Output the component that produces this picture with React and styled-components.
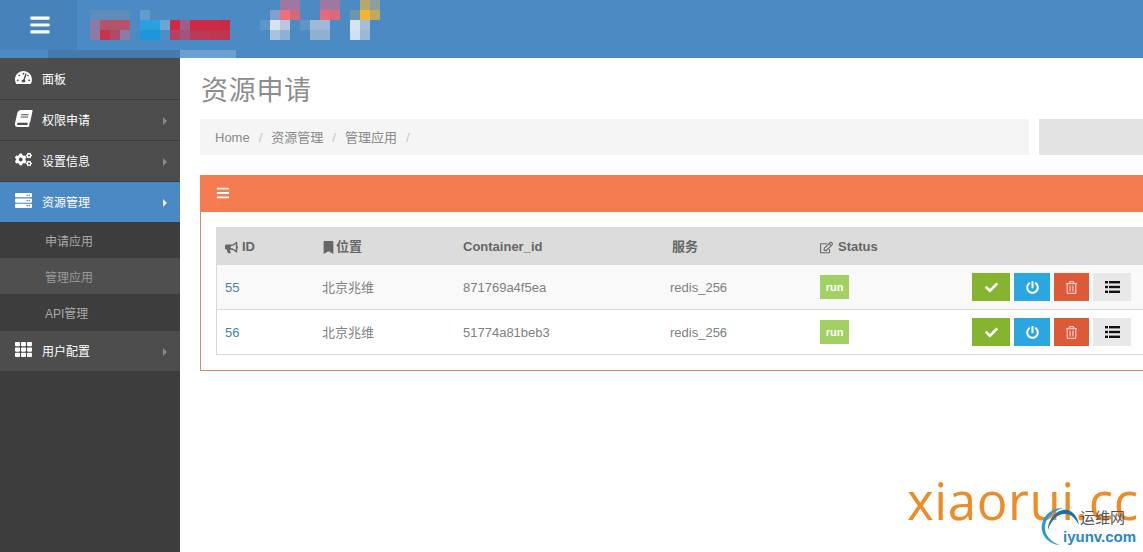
import React from 'react';
import styled, { createGlobalStyle } from 'styled-components';
import {
  FaBars, FaBook, FaBookmark, FaBullhorn, FaCheck, FaCogs, FaPowerOff,
  FaRegEdit, FaRegTrashAlt, FaServer, FaTachometerAlt, FaTh,
} from 'react-icons/fa';

const CJK = `"Liberation Sans", "Noto Sans CJK SC", sans-serif`;

const GlobalStyle = createGlobalStyle`
  html, body {
    margin: 0;
    height: 100%;
    overflow: hidden;
    background: #fff;
    font-family: ${CJK};
  }
  * { box-sizing: border-box; }
`;

const Page = styled.div`
  position: relative;
  width: 1143px;
  height: 552px;
  overflow: hidden;
  display: flex;
  flex-direction: column;
`;

const Header = styled.header`
  position: relative;
  flex: 0 0 58px;
  background: #4c8ac3;
  display: flex;
`;

const MenuCell = styled.div`
  width: 77px;
  height: 50px;
  background: #4882bb;
  color: #fff;
  padding: 14px 0 0 29px;
  font-size: 22px;
  line-height: 22px;
`;

const Mosaic = styled.svg`
  position: absolute;
  left: 0;
  top: 0;
`;

const Body = styled.div`
  flex: 1;
  display: flex;
  min-height: 0;
`;

const Sidebar = styled.nav`
  flex: 0 0 180px;
  background: #3d3d3d;
`;

const NavItem = styled.div`
  height: ${(p) => p.$h || 41}px;
  display: flex;
  align-items: center;
  padding: 2px 14px 0 15px;
  background: ${(p) => (p.$active ? '#4a89c3' : '#4d4d4d')};
  border-bottom: ${(p) => (p.$active ? 'none' : '1px solid #3c3c3c')};
  color: #fff;
  font-size: 12px;
  line-height: 16px;
`;

const NavIcon = styled.span`
  width: 27px;
  display: flex;
  font-size: 17px;
  margin-top: -5px;
  ${(p) => p.$slant && 'svg { transform: skewX(-12deg); }'}
`;

const Caret = styled.span`
  margin-left: auto;
  margin-right: -1px;
  width: 0;
  height: 0;
  border-left: 4px solid ${(p) => (p.$active ? '#e6eef6' : '#8a8a8a')};
  border-top: 4px solid transparent;
  border-bottom: 4px solid transparent;
`;

const SubList = styled.div`
  padding-bottom: 1px;
`;

const SubItem = styled.div`
  height: 36px;
  padding: 4px 0 0 45px;
  display: flex;
  align-items: center;
  font-size: 12px;
  line-height: 16px;
  color: ${(p) => (p.$active ? '#9a9a9a' : '#a8a8a8')};
  background: ${(p) => (p.$active ? '#4f4f4f' : 'transparent')};
`;

const Main = styled.main`
  flex: 1;
  min-width: 0;
  padding: 15px 0 0 20px;
`;

const Title = styled.h1`
  margin: 0 0 9px;
  padding-left: 1px;
  font-size: 27px;
  line-height: 37px;
  font-weight: 400;
  color: #8d8d8d;
  letter-spacing: 0.7px;
`;

const CrumbRow = styled.div`
  display: flex;
  gap: 10px;
  width: 1000px;
  height: 36px;
`;

const Breadcrumb = styled.div`
  flex: 0 0 829px;
  background: #f5f5f5;
  display: flex;
  align-items: center;
  padding: 2px 0 0 15px;
  font-size: 13px;
  line-height: 16px;
  color: #8a8a8a;
`;

const CrumbSep = styled.span`
  margin: 0 9px;
  color: #c4c4c4;
`;

const CrumbBox = styled.div`
  flex: 1;
  background: #e3e3e3;
`;

const Panel = styled.section`
  margin-top: 20px;
  width: 1000px;
  height: 196px;
  border: 1px solid #e0896a;
  border-top: none;
`;

const PanelHead = styled.div`
  height: 37px;
  margin: 0 -1px;
  background: #f47c50;
  color: #fff;
  font-size: 14px;
  padding: 11px 0 0 16px;
  line-height: 14px;
`;

const TableBox = styled.div`
  margin: 15px 0 0 15px;
  width: 960px;
  border-left: 1px solid #d8d8d8;
`;

const Row = styled.div`
  display: grid;
  grid-template-columns: 97px 141px 207px 150px 152px 1fr;
  align-items: center;
  height: ${(p) => p.$h}px;
  background: ${(p) => p.$bg || '#fff'};
  border-bottom: ${(p) => (p.$head ? 'none' : '1px solid #d9d9d9')};
  font-size: 13px;
  line-height: 16px;
  color: #808080;
  ${(p) => p.$head && 'margin-left: -1px; padding-left: 1px; font-weight: 700; color: #666;'}
`;

const Cell = styled.div`
  padding: 2px 0 0 ${(p) => p.$pad || 8}px;
  display: flex;
  align-items: center;
`;

const HeadIcon = styled.span`
  display: flex;
  font-size: 13px;
  margin-right: ${(p) => p.$gap}px;
`;

const IdLink = styled.a`
  color: #4a7fb0;
`;

const Badge = styled.span`
  width: 29px;
  height: 24px;
  margin-top: -2px;
  background: #a2d063;
  color: #fff;
  font-size: 11px;
  font-weight: 700;
  display: flex;
  align-items: center;
  justify-content: center;
`;

const Actions = styled.div`
  display: flex;
  gap: 4px;
  padding-left: 8px;
`;

const ActionButton = styled.button`
  width: ${(p) => p.$w}px;
  height: 28px;
  border: none;
  padding: 0;
  display: flex;
  align-items: center;
  justify-content: center;
  font-size: 13px;
  background: ${(p) => p.$bg};
  color: ${(p) => p.$fg || '#fff'};
`;

const Watermark = styled.div`
  position: absolute;
  left: 907px;
  top: 466px;
  font-family: "Open Sans", sans-serif;
  font-size: 51px;
  line-height: 68px;
  letter-spacing: 0.6px;
  color: #f08a24;
`;

const YunLogo = styled.div`
  position: absolute;
  left: 1038px;
  top: 504px;
  width: 105px;
  height: 48px;
`;

const YunName = styled.span`
  position: absolute;
  left: 42px;
  top: 6px;
  font-size: 15px;
  line-height: 16px;
  color: #555;
`;

const YunUrl = styled.span`
  position: absolute;
  left: 25px;
  top: 25px;
  font-size: 15px;
  line-height: 16px;
  font-weight: 700;
  color: #2a86c8;
`;

const mosaicBlocks = [
  [90, 10, 40, 10, '#5f8db9'], [140, 10, 10, 10, '#629bce'],
  [90, 20, 10, 10, '#8b7ba5'], [100, 20, 30, 10, '#b55468'],
  [90, 30, 10, 10, '#8b7ba5'], [100, 30, 10, 10, '#c8344c'], [110, 30, 10, 10, '#b04a68'], [120, 30, 10, 10, '#8b7ba5'],
  [140, 20, 20, 10, '#2aa0e0'], [160, 20, 10, 10, '#6aa5d5'],
  [140, 30, 20, 10, '#1e96dc'], [160, 30, 10, 10, '#4d8fc5'],
  [170, 20, 10, 10, '#cf2a45'], [180, 20, 10, 10, '#9c5f8a'], [190, 20, 30, 10, '#cf2a45'], [220, 20, 10, 10, '#c82a45'],
  [170, 30, 10, 10, '#b84060'], [180, 30, 10, 10, '#a05580'], [190, 30, 20, 10, '#bb3a58'], [210, 30, 20, 10, '#c03550'],
  [280, 0, 20, 10, '#a0789f'], [270, 10, 10, 10, '#7ea0cc'], [280, 10, 10, 10, '#ee6f80'], [290, 10, 10, 10, '#cf6a7a'],
  [260, 20, 10, 10, '#5f95c8'], [270, 20, 10, 10, '#d7e2ef'], [280, 20, 10, 10, '#b8c8de'],
  [270, 30, 10, 10, '#a9c3dd'], [280, 30, 10, 10, '#8fb0d3'],
  [320, 0, 20, 10, '#a0789f'], [320, 10, 10, 10, '#e86a78'], [330, 10, 10, 10, '#d96a7a'],
  [300, 20, 10, 10, '#6295c5'], [310, 20, 20, 10, '#9db8d8'], [310, 30, 20, 10, '#8fb0d3'],
  [360, 0, 10, 10, '#b5a86a'], [370, 0, 10, 10, '#8b9f9f'],
  [350, 10, 10, 10, '#6f94ad'], [360, 10, 10, 10, '#f5b432'], [370, 10, 10, 10, '#bfa860'],
  [350, 20, 10, 10, '#d5e3f0'], [360, 20, 10, 10, '#a5bfd8'],
  [350, 30, 10, 10, '#cfe0f0'], [360, 30, 10, 10, '#9cb8d5'],
  [48, 50, 132, 8, '#447aae'], [180, 50, 56, 8, '#6ba0d2'],
];

const rows = [
  { id: 55, container: '871769a4f5ea', bg: '#f9f9f9' },
  { id: 56, container: '51774a81beb3', bg: '#fff' },
];

// fa-list from the old icon set, the package only has the rounded one
const ListIcon = () => (
  <svg width="15" height="12" viewBox="0 0 15 12" fill="currentColor">
    <rect x="0" y="0" width="3" height="2.4" />
    <rect x="4" y="0" width="11" height="2.4" />
    <rect x="0" y="4.8" width="3" height="2.4" />
    <rect x="4" y="4.8" width="11" height="2.4" />
    <rect x="0" y="9.6" width="3" height="2.4" />
    <rect x="4" y="9.6" width="11" height="2.4" />
  </svg>
);

export default function App() {
  return (
    <Page>
      <GlobalStyle />
      <Header>
        <MenuCell><FaBars /></MenuCell>
        <Mosaic width="400" height="58" viewBox="0 0 400 58">
          {mosaicBlocks.map(([x, y, w, h, fill]) => (
            <rect key={`${x}-${y}`} x={x} y={y} width={w} height={h} fill={fill} />
          ))}
        </Mosaic>
      </Header>
      <Body>
        <Sidebar>
          <NavItem $h={42}><NavIcon><FaTachometerAlt /></NavIcon>面板</NavItem>
          <NavItem><NavIcon $slant><FaBook /></NavIcon>权限申请<Caret /></NavItem>
          <NavItem><NavIcon><FaCogs /></NavIcon>设置信息<Caret /></NavItem>
          <NavItem $active $h={40}><NavIcon><FaServer /></NavIcon>资源管理<Caret $active /></NavItem>
          <SubList>
            <SubItem>申请应用</SubItem>
            <SubItem $active>管理应用</SubItem>
            <SubItem>API管理</SubItem>
          </SubList>
          <NavItem><NavIcon><FaTh /></NavIcon>用户配置<Caret /></NavItem>
        </Sidebar>
        <Main>
          <Title>资源申请</Title>
          <CrumbRow>
            <Breadcrumb>
              Home<CrumbSep>/</CrumbSep>资源管理<CrumbSep>/</CrumbSep>管理应用<CrumbSep>/</CrumbSep>
            </Breadcrumb>
            <CrumbBox />
          </CrumbRow>
          <Panel>
            <PanelHead><FaBars /></PanelHead>
            <TableBox>
              <Row $head $h={38} $bg="#dcdcdc">
                <Cell><HeadIcon $gap={4}><FaBullhorn /></HeadIcon>ID</Cell>
                <Cell><HeadIcon $gap={1}><FaBookmark /></HeadIcon>位置</Cell>
                <Cell>Container_id</Cell>
                <Cell $pad={10}>服务</Cell>
                <Cell><HeadIcon $gap={5}><FaRegEdit /></HeadIcon>Status</Cell>
                <Cell />
              </Row>
              {rows.map((r) => (
                <Row key={r.id} $h={45} $bg={r.bg}>
                  <Cell><IdLink>{r.id}</IdLink></Cell>
                  <Cell>北京兆维</Cell>
                  <Cell>{r.container}</Cell>
                  <Cell>redis_256</Cell>
                  <Cell><Badge>run</Badge></Cell>
                  <Actions>
                    <ActionButton $w={38} $bg="#85b52f"><FaCheck /></ActionButton>
                    <ActionButton $w={36} $bg="#2ba6e1"><FaPowerOff /></ActionButton>
                    <ActionButton $w={35} $bg="#dc5a36" $fg="#f6c9c9"><FaRegTrashAlt /></ActionButton>
                    <ActionButton $w={38} $bg="#e8e8e8" $fg="#111"><ListIcon /></ActionButton>
                  </Actions>
                </Row>
              ))}
            </TableBox>
          </Panel>
        </Main>
      </Body>
      <Watermark>xiaorui.cc</Watermark>
      <YunLogo>
        <svg width="48" height="48" viewBox="0 0 48 48">
          <path d="M22 41C8 40 2 28 4 20C6 10 16 3 26 4C16 6 8 13 7 22C6 30 12 38 22 41Z" fill="#2a9ad6" />
          <path d="M10 26C10 14 20 4 30 6C36 8 40 14 41 21C37 14 33 10 28 10C20 9 13 16 10 26Z" fill="#1f6fa8" />
        </svg>
        <YunName>运维网</YunName>
        <YunUrl>iyunv.com</YunUrl>
      </YunLogo>
    </Page>
  );
}
